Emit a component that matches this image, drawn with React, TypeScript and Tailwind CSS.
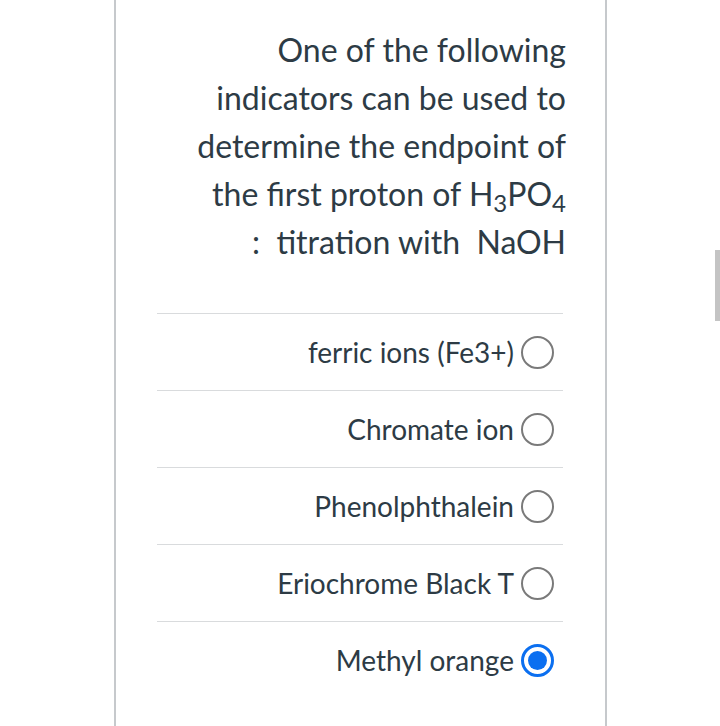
import React from "react";

const options = [
  { label: "ferric ions (Fe3+)", checked: false },
  { label: "Chromate ion", checked: false },
  { label: "Phenolphthalein", checked: false },
  { label: "Eriochrome Black T", checked: false },
  { label: "Methyl orange", checked: true },
];

function Radio({ checked }: { checked: boolean }) {
  if (checked) {
    return (
      <div className="w-[33px] h-[33px] shrink-0 rounded-full border-[3px] border-[#0b6ff0] bg-white flex items-center justify-center">
        <div className="w-[19px] h-[19px] rounded-full bg-[#0b6ff0]" />
      </div>
    );
  }
  return <div className="w-[33px] h-[33px] shrink-0 rounded-full border-2 border-[#7a7a7a] bg-white" />;
}

export default function App() {
  return (
    <div
      className="relative w-[720px] h-[726px] bg-white overflow-hidden text-[#2d3b45]"
      style={{ fontFamily: "Lato, 'Open Sans', sans-serif" }}
    >
      <div className="ml-[114px] w-[493px] h-full border-x-2 border-[#c6c9cc]">
        <div className="pt-[26px] pr-[39px] text-right text-[32px] leading-[48px] whitespace-pre">
          One of the following
          <br />
          indicators can be used to
          <br />
          determine the endpoint of
          <br />
          the first proton of H<sub>3</sub>PO<sub>4</sub>
          <br />
          {":  titration with  NaOH"}
        </div>
        <div className="mt-[47px] ml-[41px] mr-[42px]">
          {options.map((o) => (
            <div
              key={o.label}
              className="h-[77px] border-t border-[#d9dbdd] flex items-center justify-end gap-[7px] pr-[9px]"
            >
              <span className="text-[28px] leading-[42px]">{o.label}</span>
              <Radio checked={o.checked} />
            </div>
          ))}
        </div>
      </div>
      <div className="absolute right-0 top-[250px] w-[5px] h-[71px] bg-[#c4c4c4]" />
    </div>
  );
}
